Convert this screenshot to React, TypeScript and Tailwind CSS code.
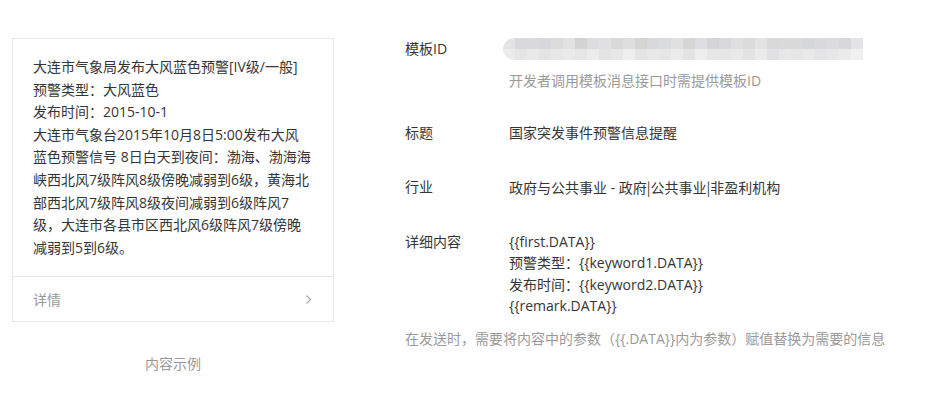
import React from 'react';

const exampleLines = [
  '大连市气象局发布大风蓝色预警[IV级/一般]',
  '预警类型：大风蓝色',
  '发布时间：2015-10-1',
  '大连市气象台2015年10月8日5:00发布大风',
  '蓝色预警信号 8日白天到夜间：渤海、渤海海',
  '峡西北风7级阵风8级傍晚减弱到6级，黄海北',
  '部西北风7级阵风8级夜间减弱到6级阵风7',
  '级，大连市各县市区西北风6级阵风7级傍晚',
  '减弱到5到6级。',
];

const detailLines = [
  '{{first.DATA}}',
  '预警类型：{{keyword1.DATA}}',
  '发布时间：{{keyword2.DATA}}',
  '{{remark.DATA}}',
];

// blurred template id, drawn as a mosaic
const topRow = [
  'bg-[#e4e4e6]', 'bg-[#d9d9dc]', 'bg-[#dadadc]', 'bg-[#d7d8db]', 'bg-[#dcdcdc]', 'bg-[#e2e2e2]',
  'bg-[#d3d3d3]', 'bg-[#dddde0]', 'bg-[#e0e0e3]', 'bg-[#d9d9d9]', 'bg-[#dcdddc]', 'bg-[#d4d5d2]',
  'bg-[#d8d9dc]', 'bg-[#dadbde]', 'bg-[#e1e1e1]', 'bg-[#d6d6d6]', 'bg-[#dcdde0]', 'bg-[#d3d3d8]',
  'bg-[#d9d9dd]', 'bg-[#dfdfdf]', 'bg-[#dbdbd9]', 'bg-[#e3e3e3]', 'bg-[#d8d9db]', 'bg-[#dadada]',
  'bg-[#d9dadc]', 'bg-[#d6d7da]', 'bg-[#dadadc]', 'bg-[#dbdcdd]', 'bg-[#d8d8db]', 'bg-[#e4e4e6]',
];
const bottomRow = [
  'bg-[#ebebeb]', 'bg-[#e5e5e5]', 'bg-[#e9e9e9]', 'bg-[#e4e4e4]', 'bg-[#e8e8e8]', 'bg-[#eaeaea]',
  'bg-[#e6e6e6]', 'bg-[#ececec]', 'bg-[#e3e3e3]', 'bg-[#e7e7e7]', 'bg-[#efefef]', 'bg-[#e5e5e6]',
  'bg-[#e8e8e8]', 'bg-[#e6e6e6]', 'bg-[#ebebeb]', 'bg-[#e4e4e4]', 'bg-[#eeeeee]', 'bg-[#e7e7e7]',
  'bg-[#e6e6e8]', 'bg-[#e9e9e9]', 'bg-[#e3e3e3]', 'bg-[#ebebeb]', 'bg-[#e1e1e4]', 'bg-[#e8e8ea]',
  'bg-[#e6e6e7]', 'bg-[#e9e9ea]', 'bg-[#e4e4e6]', 'bg-[#e7e7e9]', 'bg-[#ebebeb]', 'bg-[#f0f0f0]',
];

function BlurredId() {
  return (
    <div className="flex flex-col w-[360px] h-[22px] -ml-[6px] rounded-l-[11px] overflow-hidden blur-[0.6px]">
      <div className="flex h-[11px]">
        {topRow.map((c, i) => (
          <div key={i} className={`w-[12px] h-full ${c}`} />
        ))}
      </div>
      <div className="flex h-[11px]">
        {bottomRow.map((c, i) => (
          <div key={i} className={`w-[12px] h-full ${c}`} />
        ))}
      </div>
    </div>
  );
}

const Bar = () => <span className="font-['Noto_Sans_CJK_SC',sans-serif]">|</span>;

export default function App() {
  return (
    <div className="w-[942px] h-[406px] bg-white flex pt-[38px] pl-[12px] text-[14px] text-[#353535] font-['Open_Sans','Noto_Sans_CJK_SC',sans-serif]">
      {/* Example card */}
      <div className="w-[322px] flex flex-col">
        <div className="border border-[#e7e7e7] bg-white">
          <div className="px-5 pt-[17px] pb-[17px] leading-[22.6px]">
            {exampleLines.map((line, i) => (
              <div key={i} className="whitespace-nowrap">{line}</div>
            ))}
          </div>
          <div className="border-t border-[#e7e7e7] h-[45px] px-5 flex items-center justify-between text-[#999]">
            <span>详情</span>
            <svg width="7" height="11" viewBox="0 0 7 11" className="mr-[1px]">
              <path d="M1.5 1.5 L5.5 5.5 L1.5 9.5" fill="none" stroke="#aaa" strokeWidth="1.2" />
            </svg>
          </div>
        </div>
        <div className="mt-[31px] text-center text-[#999] leading-[22px]">内容示例</div>
      </div>

      {/* Template info */}
      <div className="ml-[71px] flex flex-col leading-[22px]">
        <div className="flex">
          <div className="w-[104px]">模板ID</div>
          <BlurredId />
        </div>
        <div className="pl-[104px] mt-[10px] text-[#9a9a9a]">开发者调用模板消息接口时需提供模板ID</div>

        <div className="flex mt-[30px]">
          <div className="w-[104px]">标题</div>
          <div>国家突发事件预警信息提醒</div>
        </div>

        <div className="flex mt-[32px]">
          <div className="w-[104px]">行业</div>
          <div>政府与公共事业 - 政府<Bar />公共事业<Bar />非盈利机构</div>
        </div>

        <div className="flex mt-[32px]">
          <div className="w-[104px]">详细内容</div>
          <div className="leading-[21.4px] -mt-[0.3px]">
            {detailLines.map((line, i) => (
              <div key={i}>{line}</div>
            ))}
          </div>
        </div>

        <div className="mt-[12px] text-[#9a9a9a]">在发送时，需要将内容中的参数（{'{{'}.DATA{'}}'}内为参数）赋值替换为需要的信息</div>
      </div>
    </div>
  );
}
